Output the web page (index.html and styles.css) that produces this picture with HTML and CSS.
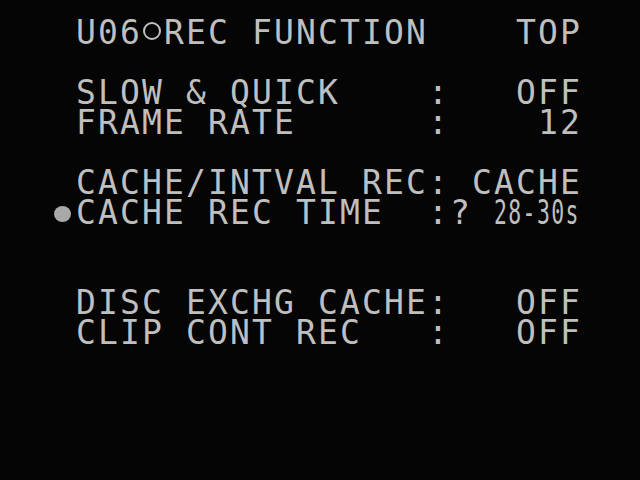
FILE: index.html
```html
<!DOCTYPE html>
<html lang="en">
<head>
    <meta charset="UTF-8">
    <meta name="viewport" content="width=device-width, initial-scale=1.0">
    <title>REC FUNCTION</title>
    <link rel="stylesheet" href="styles.css">
</head>
<body>
    <div class="screen">
        <div class="row"><span class="mark"></span><span class="text">U06<span class="cell"><span class="ring"></span></span>REC FUNCTION    TOP</span></div>
        <div class="row blank"></div>
        <div class="row"><span class="mark"></span><span class="text">SLOW &amp; QUICK    :   OFF</span></div>
        <div class="row"><span class="mark"></span><span class="text">FRAME RATE      :    12</span></div>
        <div class="row blank"></div>
        <div class="row"><span class="mark"></span><span class="text">CACHE/INTVAL REC: CACHE</span></div>
        <div class="row"><span class="mark"><span class="dot"></span></span><span class="text">CACHE REC TIME  :? <span class="narrow">28-30s</span></span></div>
        <div class="row blank"></div>
        <div class="row blank"></div>
        <div class="row"><span class="mark"></span><span class="text">DISC EXCHG CACHE:   OFF</span></div>
        <div class="row"><span class="mark"></span><span class="text">CLIP CONT REC   :   OFF</span></div>
    </div>
</body>
</html>
```

FILE: styles.css
```css
html, body {
    margin: 0;
    background-color: #050505;
}

body {
    width: 640px;
    height: 480px;
    overflow: hidden;
}

.screen {
    padding: 18px 0 0 54px;
    font-family: 'DejaVu Sans Mono', monospace;
    font-size: 33px;
    line-height: 30px;
    letter-spacing: 2.13px;
    color: #bfbfbf;
}

.row {
    display: flex;
    height: 30px;
    white-space: pre;
}

/* colonne du curseur, à gauche du texte */
.mark {
    width: 22px;
    flex: none;
    display: flex;
    align-items: center;
}

.dot {
    width: 17px;
    height: 16px;
    border-radius: 50%;
    background-color: #a9a9a9;
    margin-top: 2px;
}

.cell {
    display: inline-block;
    width: 22px;
    height: 30px;
    vertical-align: top;
    position: relative;
}

.ring {
    position: absolute;
    left: 1px;
    top: 4px;
    width: 14px;
    height: 14px;
    border: 2px solid #bfbfbf;
    border-radius: 50%;
}

.narrow {
    display: inline-block;
    transform: scaleX(0.65);
    transform-origin: left center;
}
```
